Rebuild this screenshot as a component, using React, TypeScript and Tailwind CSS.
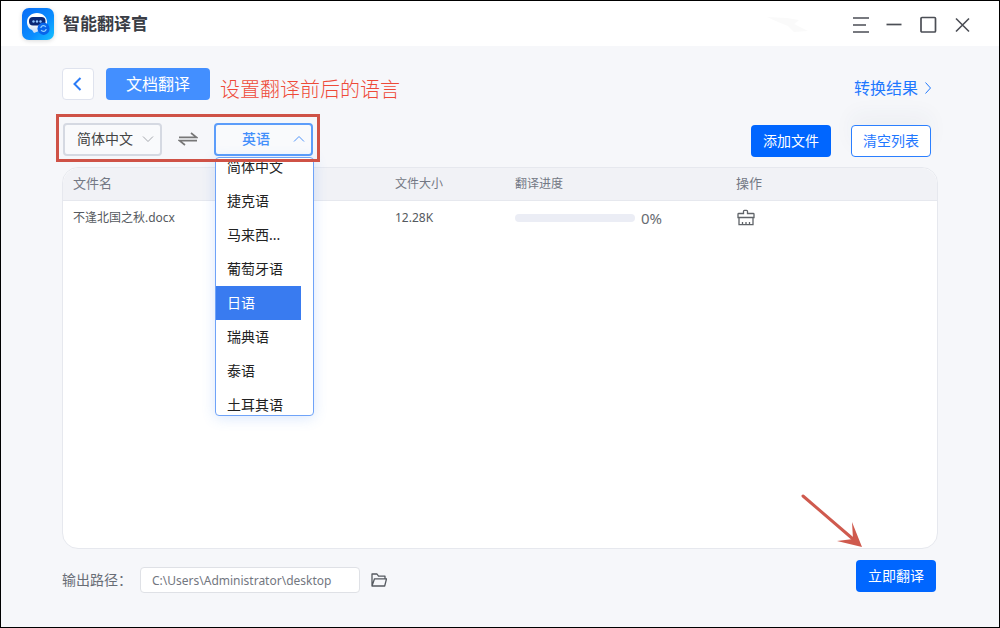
import type { ReactElement } from 'react';

interface FileItem {
  name: string;
  size: string;
  progress: number;
}

const LANGUAGES = ['简体中文', '捷克语', '马来西...', '葡萄牙语', '日语', '瑞典语', '泰语', '土耳其语'];
const ACTIVE_LANGUAGE = '日语';

const FILES: FileItem[] = [{ name: '不逢北国之秋.docx', size: '12.28K', progress: 0 }];

// Icon components
const Logo = (): ReactElement => (
  <svg className="h-8 w-8 drop-shadow-sm" viewBox="0 0 32 32" aria-hidden="true">
    <defs>
      <linearGradient id="logo-bg" x1="0" y1="0" x2="1" y2="1">
        <stop offset="0" stopColor="#0a6cf5" />
        <stop offset="0.6" stopColor="#0a8dff" />
        <stop offset="1" stopColor="#17c3ff" />
      </linearGradient>
      <linearGradient id="logo-head" x1="0" y1="0" x2="0" y2="1">
        <stop offset="0.5" stopColor="#ffffff" />
        <stop offset="1" stopColor="#c3d8f5" />
      </linearGradient>
    </defs>
    <rect width="32" height="32" rx="7" fill="url(#logo-bg)" />
    <path d="M15 5c6 0 10 4 10 9s-3 8-8 9l-5 2-2-3c-3-1-5-4-5-8 0-5 4-9 10-9z" fill="url(#logo-head)" />
    <rect x="7" y="9" width="16.500" height="8.500" rx="4" fill="#0b2775" />
    <circle cx="11.500" cy="13.500" r="1.200" fill="#8fc4ff" />
    <circle cx="15" cy="13.500" r="1.200" fill="#8fc4ff" />
    <circle cx="18.500" cy="13.500" r="1.200" fill="#8fc4ff" />
    <path d="M21.500 14.500a6 6 0 0 1 6 6c0 4-2.500 6-6 6.500-1.500-.3-6-2-6-6.500a6 6 0 0 1 6-6z" fill="#0864ea" />
    <path d="M18.800 20a2.700 2.700 0 0 1 5-1M24.200 21a2.700 2.700 0 0 1-5 1" fill="none" stroke="#8fd0ff" strokeWidth="1.300" />
  </svg>
);

const ChevronIcon = ({ d, className }: { d: string; className: string }): ReactElement => (
  <svg className={className} viewBox="0 0 16 16" fill="none" stroke="currentColor" aria-hidden="true">
    <path d={d} />
  </svg>
);

const SwapIcon = (): ReactElement => (
  <svg className="h-4 w-5" viewBox="0 0 20 16" fill="none" stroke="#777777" strokeWidth="1.700" aria-hidden="true">
    <path d="M1 6.300h17.500l-5.500-4.300M19 9.700H1.500l5.500 4.300" />
  </svg>
);

const BrushIcon = (): ReactElement => (
  <svg className="h-5 w-5" viewBox="0 0 20 20" fill="none" stroke="#5f6368" strokeWidth="1.300" aria-hidden="true">
    <path d="M2 9.500V6.300a.8.8 0 0 1 .8-.8h4.700V3.300a1 1 0 0 1 1-1h2a1 1 0 0 1 1 1v2.200h5.700a.8.8 0 0 1 .8.8v3.200zM3 9.500v7.200h14V9.500M6.500 16.700v-2.700M10 16.700v-2.700M13.500 16.700v-2.700" />
  </svg>
);

const FolderIcon = (): ReactElement => (
  <svg className="h-4 w-4" viewBox="0 0 16 16" fill="none" stroke="#555a60" strokeWidth="1.300" strokeLinejoin="round" aria-hidden="true">
    <path d="M1 14V2h5l1.500 2.200H14v2.600M1 14l2.500-7.200h12L13.700 14z" />
  </svg>
);

function TitleBar() {
  return (
    <header className="flex h-[45px] items-center justify-between bg-white pr-7 pl-[21px]">
      <div className="flex items-center gap-[9px]">
        <Logo />
        <h1 className="text-[17px] leading-6 font-bold text-[#3a3d45]">智能翻译官</h1>
      </div>
      <div className="flex items-center pt-[2px] text-[#4b4e55]">
        <svg className="mr-7 h-6 w-16" viewBox="0 0 64 24" aria-hidden="true">
          <path d="M8 4l20 1 12 2-5 4 14 7-14 1-6-6-10-4z" fill="#fafafa" />
        </svg>
        <div className="flex gap-4">
          <button type="button" aria-label="菜单">
            <svg className="h-[18px] w-[18px]" viewBox="0 0 18 18" fill="none" stroke="currentColor" strokeWidth="1.700">
              <path d="M2 2h16M2 9h13M2 16h16" />
            </svg>
          </button>
          <button type="button" aria-label="最小化">
            <svg className="h-[18px] w-[18px]" viewBox="0 0 18 18" fill="none" stroke="currentColor" strokeWidth="1.700">
              <path d="M1.500 8.500h15" />
            </svg>
          </button>
          <button type="button" aria-label="最大化">
            <svg className="h-[18px] w-[18px]" viewBox="0 0 18 18" fill="none" stroke="currentColor" strokeWidth="1.700">
              <rect x="2" y="1.500" width="14.500" height="14.500" rx="1" />
            </svg>
          </button>
          <button type="button" aria-label="关闭">
            <svg className="h-[18px] w-[18px]" viewBox="0 0 18 18" fill="none" stroke="currentColor" strokeWidth="1.600">
              <path d="M3 2.500l13 13M16 2.500l-13 13" />
            </svg>
          </button>
        </div>
      </div>
    </header>
  );
}

function LanguageBar() {
  return (
    <div className="relative ml-px flex items-center">
      <div className="relative">
        <select
          aria-label="源语言"
          className="block h-[33px] w-[99px] appearance-none rounded border-2 border-[#d5d9e2] bg-[#f9fafc] pl-3 text-sm text-[#444444]"
        >
          <option>简体中文</option>
        </select>
        <ChevronIcon d="M3 5.500l5 5 5-5" className="pointer-events-none absolute top-2 right-[6px] h-4 w-4 text-[#a5a8ae]" />
      </div>
      <button type="button" aria-label="交换语言" className="mx-4">
        <SwapIcon />
      </button>
      <div className="relative">
        <select
          aria-label="目标语言"
          className="block h-[33px] w-[99px] appearance-none rounded border-2 border-[#5c9dfa] bg-[#f9fafc] pl-[26px] text-sm font-medium text-[#438ffb]"
        >
          <option>英语</option>
        </select>
        <ChevronIcon d="M3 10.500l5-5 5 5" className="pointer-events-none absolute top-2 right-[6px] h-4 w-4 text-[#4f94fa]" />
        <div className="absolute top-[34px] left-px z-10 h-[259px] w-[99px] overflow-hidden rounded border border-[#6fa3f8] bg-white shadow-[0_2px_14px_rgba(66,133,244,0.2)]">
          <ul role="listbox" aria-label="目标语言列表" className="-mt-2 mr-3">
            {LANGUAGES.map((language) => (
              <li
                key={language}
                role="option"
                aria-selected={language === ACTIVE_LANGUAGE}
                className={`flex h-[34px] items-center pl-[11px] text-sm ${
                  language === ACTIVE_LANGUAGE ? 'bg-[#397bf0] text-white' : 'text-[#222222]'
                }`}
              >
                {language}
              </li>
            ))}
          </ul>
        </div>
      </div>
      {/* Highlight around the language pickers */}
      <div className="pointer-events-none absolute -inset-x-[7px] -top-[9px] -bottom-[6px] z-20 border-3 border-[#cf5246]" />
    </div>
  );
}

function FileTable() {
  return (
    <section className="relative mt-[10px] flex-1 rounded-2xl border border-[#e6e8ee] bg-white">
      <table className="w-full table-fixed text-left text-xs text-[#555a60]">
        <thead className="text-[#737884]">
          <tr className="h-8">
            <th className="w-[322px] rounded-tl-2xl border-b border-[#e6e8ee] bg-[#f1f2f6] pl-[10px] text-[13px] font-normal">文件名</th>
            <th className="w-[120px] border-b border-[#e6e8ee] bg-[#f1f2f6] pl-[10px] font-normal">文件大小</th>
            <th className="w-[221px] border-b border-[#e6e8ee] bg-[#f1f2f6] pl-[10px] font-normal">翻译进度</th>
            <th className="rounded-tr-2xl border-b border-[#e6e8ee] bg-[#f1f2f6] pl-[10px] text-[13px] font-normal">操作</th>
          </tr>
        </thead>
        <tbody>
          {FILES.map((file) => (
            <tr key={file.name} className="h-9">
              <td className="pl-[10px]">{file.name}</td>
              <td className="pl-[10px]">{file.size}</td>
              <td className="pl-[10px]">
                <div className="flex items-center gap-[6px]">
                  <div className="h-2 w-[120px] overflow-hidden rounded-full bg-[#ebedf5]">
                    <div className="h-full bg-[#0066ff]" style={{ width: `${file.progress}%` }} />
                  </div>
                  <span className="text-[15px] leading-5 text-[#686c72]">{file.progress}%</span>
                </div>
              </td>
              <td className="pl-[10px]">
                <button type="button" aria-label="清除" className="block">
                  <BrushIcon />
                </button>
              </td>
            </tr>
          ))}
        </tbody>
      </table>
      <svg className="pointer-events-none absolute right-[73px] bottom-0 h-14 w-16" viewBox="0 0 64 56" aria-hidden="true">
        <path d="M3 4L53 47" stroke="#cf5a4e" strokeWidth="3" strokeLinecap="round" />
        <path d="M62 55l-25-6 16-2-1-17z" fill="#cf5a4e" />
      </svg>
    </section>
  );
}

function App() {
  return (
    <div className="flex min-h-screen flex-col border border-black bg-[#f6f7fa] font-['Noto_Sans','Noto_Sans_CJK_SC',sans-serif]">
      <TitleBar />
      <main className="flex flex-1 flex-col px-[61px] pt-[22px] pb-[34px]">
        <div className="flex items-center justify-between">
          <div className="flex items-center">
            <button
              type="button"
              aria-label="返回"
              className="flex h-8 w-8 items-center justify-center rounded border border-[#dfe3ee] bg-white text-[#2b7cf7]"
            >
              <ChevronIcon d="M10.500 2l-6 6 6 6" className="h-4 w-4 stroke-2" />
            </button>
            <button type="button" className="ml-3 h-8 w-[104px] rounded bg-[#438fff] text-base text-white">
              文档翻译
            </button>
            <p className="mt-3 ml-[10px] text-xl leading-5 font-light text-[#ee4a38]">设置翻译前后的语言</p>
          </div>
          <a href="#results" className="mt-2 mr-[2px] flex items-center gap-[2px] text-base text-[#1f78ff]">
            转换结果
            <ChevronIcon d="M5.500 2.500l5 5.500-5 5.500" className="h-4 w-4" />
          </a>
        </div>
        <div className="mt-[21px] flex items-center justify-between">
          <LanguageBar />
          <div className="mt-1 mr-[7px] flex gap-5">
            <button type="button" className="h-8 w-20 rounded bg-[#0066ff] text-sm text-white">
              添加文件
            </button>
            <button
              type="button"
              className="h-8 w-20 rounded border border-[#2b7fff] bg-white text-sm text-[#1f78ff] shadow-[0_-12px_20px_rgba(60,70,90,0.04)]"
            >
              清空列表
            </button>
          </div>
        </div>
        <FileTable />
        <footer className="mt-[10px] flex items-center justify-between pr-[2px]">
          <div className="mt-2 flex items-center">
            <label htmlFor="output-path" className="text-sm text-[#686d76]">
              输出路径：
            </label>
            <input
              id="output-path"
              type="text"
              readOnly
              value="C:\Users\Administrator\desktop"
              className="ml-2 h-[26px] w-[220px] rounded-sm border border-[#dfe1e6] bg-white px-[11px] text-xs text-[#73777f]"
            />
            <button type="button" aria-label="选择文件夹" className="ml-[11px]">
              <FolderIcon />
            </button>
          </div>
          <button type="button" className="h-8 w-20 rounded bg-[#0066ff] text-sm text-white">
            立即翻译
          </button>
        </footer>
      </main>
    </div>
  );
}

export default App;
